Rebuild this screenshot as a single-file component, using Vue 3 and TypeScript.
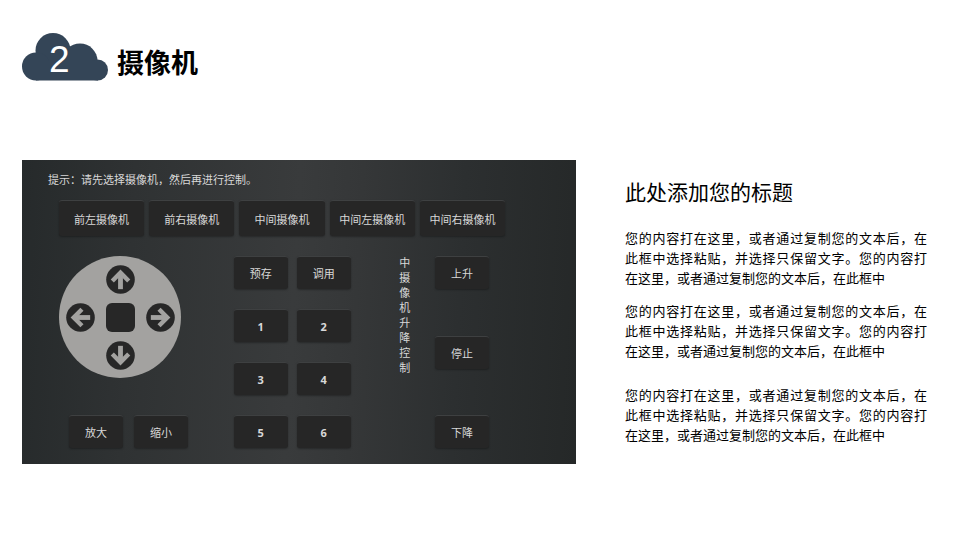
<script setup lang="ts">
import { ref } from 'vue'

interface Direction {
  name: string
  label: string
  turn: string
}

const cameras: string[] = ['前左摄像机', '前右摄像机', '中间摄像机', '中间左摄像机', '中间右摄像机']
const presets: string[] = ['1', '2', '3', '4', '5', '6']
const lifts: string[] = ['上升', '停止', '下降']
const directions: Direction[] = [
  { name: 'up', label: '向上', turn: 'rotate(0 15 15)' },
  { name: 'left', label: '向左', turn: 'rotate(270 15 15)' },
  { name: 'right', label: '向右', turn: 'rotate(90 15 15)' },
  { name: 'down', label: '向下', turn: 'rotate(180 15 15)' },
]

const lines: string[] = [
  '您的内容打在这里，或者通过复制您的文本后，在',
  '此框中选择粘贴，并选择只保留文字。您的内容打',
  '在这里，或者通过复制您的文本后，在此框中',
]
const paragraphs: number[] = [1, 2, 3]

const selected = ref<string>('')
</script>

<template>
  <main class="page">
    <header class="heading">
      <div class="badge">
        <svg class="cloud" viewBox="0 0 86 48" aria-hidden="true">
          <circle cx="31" cy="17.500" r="17.500" />
          <circle cx="58" cy="28" r="17.500" />
          <circle cx="14" cy="33.500" r="14" />
          <circle cx="75.500" cy="37" r="10.500" />
          <rect x="14" y="28" width="62" height="19.500" />
        </svg>
        <span class="number">2</span>
      </div>
      <h1>摄像机</h1>
    </header>

    <div class="content">
      <section class="panel">
        <p class="hint">提示：请先选择摄像机，然后再进行控制。</p>
        <div class="cameras">
          <button v-for="camera in cameras" :key="camera" type="button" class="key" @click="selected = camera">
            {{ camera }}
          </button>
        </div>
        <div class="controls">
          <div class="motion">
            <div class="dial">
              <button
                v-for="d in directions"
                :key="d.name"
                type="button"
                class="arrow"
                :class="d.name"
                :aria-label="d.label"
              >
                <svg viewBox="0 0 30 30" aria-hidden="true">
                  <circle cx="15" cy="15" r="14.800" fill="#272727" />
                  <g :transform="d.turn" fill="none" stroke="#a3a2a0">
                    <path d="M15 25V9" stroke-width="5" />
                    <path d="M6.500 16.500L15 8L23.500 16.500" stroke-width="4.600" />
                  </g>
                </svg>
              </button>
              <button type="button" class="center" aria-label="复位"></button>
            </div>
            <div class="zoom">
              <button type="button" class="key">放大</button>
              <button type="button" class="key">缩小</button>
            </div>
          </div>
          <div class="presets">
            <button type="button" class="key">预存</button>
            <button type="button" class="key">调用</button>
            <button v-for="preset in presets" :key="preset" type="button" class="key digit">{{ preset }}</button>
          </div>
          <p class="lift-label">中摄像机升降控制</p>
          <div class="lift">
            <button v-for="lift in lifts" :key="lift" type="button" class="key">{{ lift }}</button>
          </div>
        </div>
      </section>

      <article class="notes">
        <h2>此处添加您的标题</h2>
        <p v-for="n in paragraphs" :key="n">
          <span v-for="(line, i) in lines" :key="i" class="line">{{ line }}</span>
        </p>
      </article>
    </div>
  </main>
</template>

<style>
body {
  margin: 0;
  background: #fff;
}
</style>

<style scoped>
.page {
  box-sizing: border-box;
  padding: 33px 33px 33px 22px;
  color: #000;
  font-family: 'Liberation Sans', 'Noto Sans CJK SC', sans-serif;
}
.heading {
  display: flex;
  align-items: center;
  gap: 9px;
  height: 48px;
}
.badge {
  display: grid;
  width: 86px;
  height: 48px;
}
.cloud,
.number {
  grid-area: 1 / 1;
}
.cloud {
  width: 86px;
  height: 48px;
  fill: #344557;
}
.number {
  padding: 6px 0 0 27px;
  color: #fff;
  font-size: 37px;
  line-height: 42px;
}
h1,
h2,
p {
  margin: 0;
}
h1 {
  padding-top: 14px;
  font-size: 27px;
  line-height: 36px;
  font-weight: 700;
}
.content {
  display: grid;
  grid-template-columns: 554fr 302fr;
  gap: 49px;
  margin-top: 79px;
}
.panel {
  box-sizing: border-box;
  padding: 10px 71px 16px 37px;
  color: #d8d8d8;
  font-size: 11px;
  background: linear-gradient(93deg, #262a2b 0%, #2f3233 20%, #393b3c 49%, #353738 60%, #2c2f30 78%, #252828 100%);
}
.hint {
  margin-left: -11px;
  line-height: 20px;
}
.cameras {
  display: grid;
  grid-template-columns: repeat(5, 1fr);
  gap: 5px;
  margin-top: 10px;
}
.key {
  box-sizing: border-box;
  height: 33px;
  padding: 0;
  border: 0;
  border-top: 1px solid #3e4041;
  border-radius: 3px;
  background: #262626;
  box-shadow: 0 1px 2px rgba(0, 0, 0, 0.3);
  color: #d8d8d8;
  font: inherit;
  white-space: nowrap;
}
.cameras .key {
  height: 36px;
}
.digit {
  font-family: 'Noto Sans', sans-serif;
  font-weight: 700;
}
.controls {
  display: flex;
  justify-content: space-between;
  margin-top: 20px;
  padding-right: 16px;
}
.motion {
  display: flex;
  flex-direction: column;
  justify-content: space-between;
  width: 129px;
}
.dial {
  display: grid;
  grid-template-columns: repeat(3, 29px);
  grid-template-rows: repeat(3, 29px);
  gap: 9px 11px;
  place-content: center;
  width: 122px;
  height: 122px;
  border-radius: 50%;
  background: #a3a2a0;
}
.arrow,
.center {
  padding: 0;
  border: 0;
  background: none;
}
.arrow svg {
  display: block;
  width: 29px;
  height: 29px;
}
.up {
  grid-area: 1 / 2;
}
.left {
  grid-area: 2 / 1;
}
.right {
  grid-area: 2 / 3;
}
.down {
  grid-area: 3 / 2;
}
.center {
  grid-area: 2 / 2;
  border-radius: 6px;
  background: #272727;
}
.zoom {
  display: flex;
  justify-content: space-between;
  padding-left: 10px;
}
.zoom .key,
.lift .key {
  width: 54px;
}
.presets {
  display: grid;
  grid-template-columns: repeat(2, 54px);
  gap: 20px 9px;
}
.lift-label {
  width: 11px;
  line-height: 15px;
  margin-left: 3px;
}
.lift {
  display: flex;
  flex-direction: column;
  justify-content: space-between;
  margin-left: -21px;
}
.notes {
  padding-top: 18px;
}
h2 {
  margin-bottom: 21px;
  font-size: 21px;
  line-height: 30px;
  font-weight: 400;
}
.notes p {
  margin-bottom: 13px;
  font-size: 13px;
  line-height: 20px;
}
.notes p:last-child {
  margin: 24px 0 0;
}
.line {
  display: block;
  white-space: nowrap;
  text-align: justify;
  text-align-last: justify;
}
.line:last-child {
  text-align-last: left;
}
</style>
